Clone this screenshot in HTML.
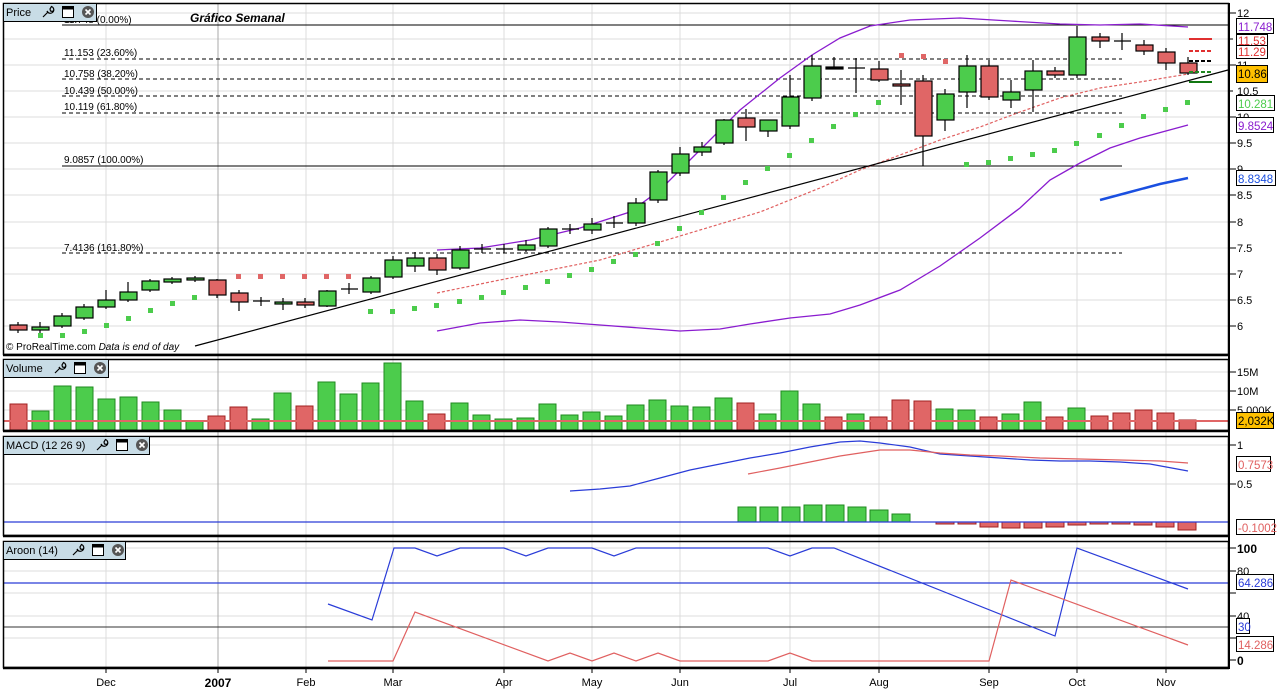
<!DOCTYPE html>
<html><head><meta charset="utf-8"><style>
body{margin:0;width:1281px;height:690px;background:#fff;overflow:hidden;font-family:"Liberation Sans",sans-serif}
svg text{font-family:"Liberation Sans",sans-serif}
</style></head><body>
<svg width="1281" height="690" viewBox="0 0 1281 690" xmlns="http://www.w3.org/2000/svg">
<g stroke="#dcdcdc" stroke-width="1">
<line x1="106" y1="3" x2="106" y2="668"/><line x1="306" y1="3" x2="306" y2="668"/><line x1="393" y1="3" x2="393" y2="668"/><line x1="504" y1="3" x2="504" y2="668"/><line x1="592" y1="3" x2="592" y2="668"/><line x1="680" y1="3" x2="680" y2="668"/><line x1="790" y1="3" x2="790" y2="668"/><line x1="879" y1="3" x2="879" y2="668"/><line x1="989" y1="3" x2="989" y2="668"/><line x1="1077" y1="3" x2="1077" y2="668"/><line x1="1166" y1="3" x2="1166" y2="668"/>
<line x1="3" y1="13" x2="1228" y2="13"/><line x1="3" y1="39" x2="1228" y2="39"/><line x1="3" y1="65" x2="1228" y2="65"/><line x1="3" y1="91" x2="1228" y2="91"/><line x1="3" y1="117" x2="1228" y2="117"/><line x1="3" y1="143" x2="1228" y2="143"/><line x1="3" y1="169" x2="1228" y2="169"/><line x1="3" y1="195" x2="1228" y2="195"/><line x1="3" y1="222" x2="1228" y2="222"/><line x1="3" y1="248" x2="1228" y2="248"/><line x1="3" y1="274" x2="1228" y2="274"/><line x1="3" y1="300" x2="1228" y2="300"/><line x1="3" y1="326" x2="1228" y2="326"/>
<line x1="3" y1="372" x2="1228" y2="372"/><line x1="3" y1="391" x2="1228" y2="391"/><line x1="3" y1="410" x2="1228" y2="410"/>
<line x1="3" y1="445" x2="1228" y2="445"/><line x1="3" y1="484" x2="1228" y2="484"/>
<line x1="3" y1="548" x2="1228" y2="548"/><line x1="3" y1="571" x2="1228" y2="571"/><line x1="3" y1="593" x2="1228" y2="593"/><line x1="3" y1="616" x2="1228" y2="616"/><line x1="3" y1="638" x2="1228" y2="638"/>
</g>
<line x1="218" y1="3" x2="218" y2="668" stroke="#a8a8a8"/>
<g stroke="#000" stroke-width="1">
<line x1="62" y1="25" x2="1228" y2="25"/>
<line x1="62" y1="166" x2="1122" y2="166"/>
<g stroke-dasharray="4,3"><line x1="62" y1="59" x2="1122" y2="59"/><line x1="62" y1="79" x2="1122" y2="79"/><line x1="62" y1="96" x2="1122" y2="96"/><line x1="62" y1="113" x2="1122" y2="113"/><line x1="62" y1="253" x2="1122" y2="253"/></g>
</g>
<g font-size="10" fill="#000">
<text x="64" y="23">11.748 (0.00%)</text>
<text x="64" y="56">11.153 (23.60%)</text><text x="64" y="77">10.758 (38.20%)</text><text x="64" y="94">10.439 (50.00%)</text><text x="64" y="110">10.119 (61.80%)</text><text x="64" y="163">9.0857 (100.00%)</text><text x="64" y="251">7.4136 (161.80%)</text>
</g>
<text x="190" y="22" font-size="12" font-weight="bold" font-style="italic" fill="#000">Gráfico Semanal</text>
<polyline fill="none" stroke="#8a1ccf" stroke-width="1.3" points="437,250 480,248 530,240 580,228 630,212 660,190 700,150 740,110 780,78 812,55 840,38 870,26 910,20 960,18 1010,21 1060,24 1100,25 1140,24 1188,27"/>
<polyline fill="none" stroke="#8a1ccf" stroke-width="1.3" points="437,331 480,323 520,320 560,322 600,325 640,328 680,331 720,329 750,324 790,318 830,314 860,305 900,290 940,266 980,238 1020,208 1050,180 1080,163 1110,148 1140,138 1188,125"/>
<polyline fill="none" stroke="#e06060" stroke-width="1.2" stroke-dasharray="3,2" points="437,293 490,282 540,272 600,260 650,245 700,230 760,212 820,188 860,170 900,155 940,140 980,127 1020,112 1060,98 1100,88 1140,82 1188,74"/>
<line x1="195" y1="346" x2="1228" y2="70" stroke="#000" stroke-width="1.2"/>
<g fill="#4ccc4c">
<rect x="38" y="333" width="5" height="5"/><rect x="60" y="333" width="5" height="5"/><rect x="82" y="329" width="5" height="5"/><rect x="104" y="323" width="5" height="5"/><rect x="126" y="316" width="5" height="5"/><rect x="148" y="308" width="5" height="5"/><rect x="170" y="301" width="5" height="5"/><rect x="192" y="295" width="5" height="5"/>
<rect x="368" y="309" width="5" height="5"/><rect x="390" y="309" width="5" height="5"/><rect x="412" y="306" width="5" height="5"/><rect x="434" y="303" width="5" height="5"/><rect x="457" y="299" width="5" height="5"/><rect x="479" y="295" width="5" height="5"/><rect x="501" y="290" width="5" height="5"/><rect x="523" y="285" width="5" height="5"/><rect x="545" y="279" width="5" height="5"/><rect x="567" y="273" width="5" height="5"/><rect x="589" y="267" width="5" height="5"/><rect x="611" y="259" width="5" height="5"/><rect x="633" y="252" width="5" height="5"/><rect x="655" y="241" width="5" height="5"/><rect x="677" y="226" width="5" height="5"/><rect x="699" y="210" width="5" height="5"/><rect x="721" y="195" width="5" height="5"/><rect x="743" y="180" width="5" height="5"/><rect x="765" y="166" width="5" height="5"/><rect x="787" y="153" width="5" height="5"/><rect x="809" y="138" width="5" height="5"/><rect x="831" y="124" width="5" height="5"/><rect x="853" y="112" width="5" height="5"/><rect x="876" y="100" width="5" height="5"/>
<rect x="964" y="162" width="5" height="5"/><rect x="986" y="160" width="5" height="5"/><rect x="1008" y="156" width="5" height="5"/><rect x="1030" y="152" width="5" height="5"/><rect x="1052" y="148" width="5" height="5"/><rect x="1074" y="141" width="5" height="5"/><rect x="1097" y="133" width="5" height="5"/><rect x="1119" y="123" width="5" height="5"/><rect x="1141" y="114" width="5" height="5"/><rect x="1163" y="107" width="5" height="5"/><rect x="1185" y="100" width="5" height="5"/>
</g>
<g fill="#e06666">
<rect x="236" y="274" width="5" height="5"/><rect x="258" y="274" width="5" height="5"/><rect x="280" y="274" width="5" height="5"/><rect x="302" y="274" width="5" height="5"/><rect x="324" y="274" width="5" height="5"/><rect x="346" y="274" width="5" height="5"/>
<rect x="899" y="53" width="5" height="5"/><rect x="921" y="54" width="5" height="5"/><rect x="943" y="59" width="5" height="5"/>
</g>
<g stroke="#000" stroke-width="1.2">
<line x1="18" y1="322" x2="18" y2="333"/><rect x="10" y="325" width="17" height="5" fill="#e06666"/>
<line x1="40" y1="322" x2="40" y2="333"/><rect x="32" y="327" width="17" height="3" fill="#4ccc4c"/>
<line x1="62" y1="313" x2="62" y2="328"/><rect x="54" y="316" width="17" height="10" fill="#4ccc4c"/>
<line x1="84" y1="304" x2="84" y2="320"/><rect x="76" y="307" width="17" height="11" fill="#4ccc4c"/>
<line x1="106" y1="290" x2="106" y2="309"/><rect x="98" y="300" width="17" height="7" fill="#4ccc4c"/>
<line x1="128" y1="282" x2="128" y2="302"/><rect x="120" y="292" width="17" height="8" fill="#4ccc4c"/>
<line x1="150" y1="279" x2="150" y2="292"/><rect x="142" y="281" width="17" height="9" fill="#4ccc4c"/>
<line x1="172" y1="277" x2="172" y2="284"/><rect x="164" y="279" width="17" height="3" fill="#4ccc4c"/>
<line x1="195" y1="276" x2="195" y2="282"/><rect x="187" y="278" width="17" height="2" fill="#4ccc4c"/>
<line x1="217" y1="279" x2="217" y2="298"/><rect x="209" y="280" width="17" height="15" fill="#e06666"/>
<line x1="239" y1="290" x2="239" y2="311"/><rect x="231" y="293" width="17" height="9" fill="#e06666"/>
<line x1="261" y1="297" x2="261" y2="306"/><line x1="253" y1="301" x2="270" y2="301"/>
<line x1="283" y1="298" x2="283" y2="310"/><rect x="275" y="302" width="17" height="2" fill="#4ccc4c"/>
<line x1="305" y1="298" x2="305" y2="308"/><rect x="297" y="302" width="17" height="3" fill="#e06666"/>
<line x1="327" y1="290" x2="327" y2="307"/><rect x="319" y="291" width="17" height="15" fill="#4ccc4c"/>
<line x1="349" y1="283" x2="349" y2="294"/><line x1="341" y1="289" x2="358" y2="289"/>
<line x1="371" y1="276" x2="371" y2="294"/><rect x="363" y="278" width="17" height="14" fill="#4ccc4c"/>
<line x1="393" y1="256" x2="393" y2="279"/><rect x="385" y="260" width="17" height="17" fill="#4ccc4c"/>
<line x1="415" y1="252" x2="415" y2="272"/><rect x="407" y="258" width="17" height="8" fill="#4ccc4c"/>
<line x1="437" y1="254" x2="437" y2="275"/><rect x="429" y="258" width="17" height="12" fill="#e06666"/>
<line x1="460" y1="246" x2="460" y2="270"/><rect x="452" y="250" width="17" height="18" fill="#4ccc4c"/>
<line x1="482" y1="244" x2="482" y2="253"/><line x1="474" y1="249" x2="491" y2="249"/>
<line x1="504" y1="244" x2="504" y2="253"/><line x1="496" y1="249" x2="513" y2="249"/>
<line x1="526" y1="240" x2="526" y2="252"/><rect x="518" y="245" width="17" height="5" fill="#4ccc4c"/>
<line x1="548" y1="227" x2="548" y2="248"/><rect x="540" y="229" width="17" height="17" fill="#4ccc4c"/>
<line x1="570" y1="224" x2="570" y2="234"/><line x1="562" y1="229" x2="579" y2="229"/>
<line x1="592" y1="218" x2="592" y2="234"/><rect x="584" y="224" width="17" height="6" fill="#4ccc4c"/>
<line x1="614" y1="216" x2="614" y2="228"/><line x1="606" y1="223" x2="623" y2="223"/>
<line x1="636" y1="198" x2="636" y2="226"/><rect x="628" y="203" width="17" height="20" fill="#4ccc4c"/>
<line x1="658" y1="170" x2="658" y2="203"/><rect x="650" y="172" width="17" height="28" fill="#4ccc4c"/>
<line x1="680" y1="147" x2="680" y2="176"/><rect x="672" y="154" width="17" height="19" fill="#4ccc4c"/>
<line x1="702" y1="142" x2="702" y2="156"/><rect x="694" y="147" width="17" height="5" fill="#4ccc4c"/>
<line x1="724" y1="119" x2="724" y2="145"/><rect x="716" y="120" width="17" height="23" fill="#4ccc4c"/>
<line x1="746" y1="109" x2="746" y2="141"/><rect x="738" y="118" width="17" height="9" fill="#e06666"/>
<line x1="768" y1="120" x2="768" y2="137"/><rect x="760" y="120" width="17" height="11" fill="#4ccc4c"/>
<line x1="790" y1="75" x2="790" y2="129"/><rect x="782" y="97" width="17" height="29" fill="#4ccc4c"/>
<line x1="812" y1="55" x2="812" y2="101"/><rect x="804" y="66" width="17" height="32" fill="#4ccc4c"/>
<line x1="834" y1="57" x2="834" y2="69"/><rect x="826" y="67" width="17" height="2" fill="#000"/>
<line x1="856" y1="58" x2="856" y2="93"/><line x1="848" y1="68" x2="865" y2="68"/>
<line x1="879" y1="61" x2="879" y2="82"/><rect x="871" y="69" width="17" height="11" fill="#e06666"/>
<line x1="901" y1="70" x2="901" y2="105"/><rect x="893" y="84" width="17" height="2" fill="#e06666"/>
<line x1="923" y1="75" x2="923" y2="166"/><rect x="915" y="81" width="17" height="55" fill="#e06666"/>
<line x1="945" y1="89" x2="945" y2="131"/><rect x="937" y="94" width="17" height="26" fill="#4ccc4c"/>
<line x1="967" y1="55" x2="967" y2="108"/><rect x="959" y="66" width="17" height="26" fill="#4ccc4c"/>
<line x1="989" y1="60" x2="989" y2="100"/><rect x="981" y="66" width="17" height="31" fill="#e06666"/>
<line x1="1011" y1="80" x2="1011" y2="108"/><rect x="1003" y="92" width="17" height="8" fill="#4ccc4c"/>
<line x1="1033" y1="60" x2="1033" y2="112"/><rect x="1025" y="71" width="17" height="19" fill="#4ccc4c"/>
<line x1="1055" y1="67" x2="1055" y2="78"/><rect x="1047" y="71" width="17" height="4" fill="#e06666"/>
<line x1="1077" y1="26" x2="1077" y2="78"/><rect x="1069" y="37" width="17" height="38" fill="#4ccc4c"/>
<line x1="1100" y1="33" x2="1100" y2="48"/><rect x="1092" y="37" width="17" height="4" fill="#e06666"/>
<line x1="1122" y1="33" x2="1122" y2="50"/><line x1="1114" y1="41" x2="1131" y2="41"/>
<line x1="1144" y1="40" x2="1144" y2="55"/><rect x="1136" y="45" width="17" height="6" fill="#e06666"/>
<line x1="1166" y1="48" x2="1166" y2="70"/><rect x="1158" y="52" width="17" height="11" fill="#e06666"/>
<line x1="1188" y1="57" x2="1188" y2="75"/><rect x="1180" y="63" width="17" height="10" fill="#e06666"/>
</g>
<line x1="1189" y1="39" x2="1212" y2="39" stroke="#e03030" stroke-width="2"/>
<line x1="1189" y1="51" x2="1212" y2="51" stroke="#e03030" stroke-width="2" stroke-dasharray="4,2"/>
<line x1="1189" y1="61" x2="1212" y2="61" stroke="#000" stroke-width="2" stroke-dasharray="4,2"/>
<line x1="1189" y1="72" x2="1212" y2="72" stroke="#228822" stroke-width="2" stroke-dasharray="4,2"/>
<line x1="1189" y1="82" x2="1212" y2="82" stroke="#117711" stroke-width="2"/>
<polyline fill="none" stroke="#1a4fe0" stroke-width="2.5" points="1100,200 1130,192 1160,184 1188,178"/>
<g stroke-width="1">
<rect x="10" y="404" width="17" height="26" fill="#e06666" stroke="#a02020"/>
<rect x="32" y="411" width="17" height="19" fill="#4ccc4c" stroke="#1f8a1f"/>
<rect x="54" y="386" width="17" height="44" fill="#4ccc4c" stroke="#1f8a1f"/>
<rect x="76" y="387" width="17" height="43" fill="#4ccc4c" stroke="#1f8a1f"/>
<rect x="98" y="399" width="17" height="31" fill="#4ccc4c" stroke="#1f8a1f"/>
<rect x="120" y="397" width="17" height="33" fill="#4ccc4c" stroke="#1f8a1f"/>
<rect x="142" y="402" width="17" height="28" fill="#4ccc4c" stroke="#1f8a1f"/>
<rect x="164" y="410" width="17" height="20" fill="#4ccc4c" stroke="#1f8a1f"/>
<rect x="186" y="421" width="17" height="9" fill="#4ccc4c" stroke="#1f8a1f"/>
<rect x="208" y="416" width="17" height="14" fill="#e06666" stroke="#a02020"/>
<rect x="230" y="407" width="17" height="23" fill="#e06666" stroke="#a02020"/>
<rect x="252" y="419" width="17" height="11" fill="#4ccc4c" stroke="#1f8a1f"/>
<rect x="274" y="393" width="17" height="37" fill="#4ccc4c" stroke="#1f8a1f"/>
<rect x="296" y="406" width="17" height="24" fill="#e06666" stroke="#a02020"/>
<rect x="318" y="382" width="17" height="48" fill="#4ccc4c" stroke="#1f8a1f"/>
<rect x="340" y="394" width="17" height="36" fill="#4ccc4c" stroke="#1f8a1f"/>
<rect x="362" y="383" width="17" height="47" fill="#4ccc4c" stroke="#1f8a1f"/>
<rect x="384" y="363" width="17" height="67" fill="#4ccc4c" stroke="#1f8a1f"/>
<rect x="406" y="401" width="17" height="29" fill="#4ccc4c" stroke="#1f8a1f"/>
<rect x="428" y="414" width="17" height="16" fill="#e06666" stroke="#a02020"/>
<rect x="451" y="403" width="17" height="27" fill="#4ccc4c" stroke="#1f8a1f"/>
<rect x="473" y="415" width="17" height="15" fill="#4ccc4c" stroke="#1f8a1f"/>
<rect x="495" y="419" width="17" height="11" fill="#4ccc4c" stroke="#1f8a1f"/>
<rect x="517" y="418" width="17" height="12" fill="#4ccc4c" stroke="#1f8a1f"/>
<rect x="539" y="404" width="17" height="26" fill="#4ccc4c" stroke="#1f8a1f"/>
<rect x="561" y="415" width="17" height="15" fill="#4ccc4c" stroke="#1f8a1f"/>
<rect x="583" y="412" width="17" height="18" fill="#4ccc4c" stroke="#1f8a1f"/>
<rect x="605" y="416" width="17" height="14" fill="#4ccc4c" stroke="#1f8a1f"/>
<rect x="627" y="405" width="17" height="25" fill="#4ccc4c" stroke="#1f8a1f"/>
<rect x="649" y="400" width="17" height="30" fill="#4ccc4c" stroke="#1f8a1f"/>
<rect x="671" y="406" width="17" height="24" fill="#4ccc4c" stroke="#1f8a1f"/>
<rect x="693" y="407" width="17" height="23" fill="#4ccc4c" stroke="#1f8a1f"/>
<rect x="715" y="398" width="17" height="32" fill="#4ccc4c" stroke="#1f8a1f"/>
<rect x="737" y="403" width="17" height="27" fill="#e06666" stroke="#a02020"/>
<rect x="759" y="414" width="17" height="16" fill="#4ccc4c" stroke="#1f8a1f"/>
<rect x="781" y="391" width="17" height="39" fill="#4ccc4c" stroke="#1f8a1f"/>
<rect x="803" y="404" width="17" height="26" fill="#4ccc4c" stroke="#1f8a1f"/>
<rect x="825" y="417" width="17" height="13" fill="#e06666" stroke="#a02020"/>
<rect x="847" y="414" width="17" height="16" fill="#4ccc4c" stroke="#1f8a1f"/>
<rect x="870" y="417" width="17" height="13" fill="#e06666" stroke="#a02020"/>
<rect x="892" y="400" width="17" height="30" fill="#e06666" stroke="#a02020"/>
<rect x="914" y="401" width="17" height="29" fill="#e06666" stroke="#a02020"/>
<rect x="936" y="409" width="17" height="21" fill="#4ccc4c" stroke="#1f8a1f"/>
<rect x="958" y="410" width="17" height="20" fill="#4ccc4c" stroke="#1f8a1f"/>
<rect x="980" y="417" width="17" height="13" fill="#e06666" stroke="#a02020"/>
<rect x="1002" y="414" width="17" height="16" fill="#4ccc4c" stroke="#1f8a1f"/>
<rect x="1024" y="402" width="17" height="28" fill="#4ccc4c" stroke="#1f8a1f"/>
<rect x="1046" y="417" width="17" height="13" fill="#e06666" stroke="#a02020"/>
<rect x="1068" y="408" width="17" height="22" fill="#4ccc4c" stroke="#1f8a1f"/>
<rect x="1091" y="416" width="17" height="14" fill="#e06666" stroke="#a02020"/>
<rect x="1113" y="413" width="17" height="17" fill="#e06666" stroke="#a02020"/>
<rect x="1135" y="410" width="17" height="20" fill="#e06666" stroke="#a02020"/>
<rect x="1157" y="413" width="17" height="17" fill="#e06666" stroke="#a02020"/>
<rect x="1179" y="420" width="17" height="10" fill="#e06666" stroke="#a02020"/>
</g>
<line x1="3" y1="421" x2="1228" y2="421" stroke="#e06666" stroke-width="2"/>
<g fill="#4ccc4c" stroke="#1f8a1f">
<rect x="738" y="507" width="18" height="15"/><rect x="760" y="507" width="18" height="15"/><rect x="782" y="507" width="18" height="15"/><rect x="804" y="505" width="18" height="17"/><rect x="826" y="505" width="18" height="17"/><rect x="848" y="507" width="18" height="15"/><rect x="870" y="510" width="18" height="12"/><rect x="892" y="514" width="18" height="8"/>
</g>
<g fill="#e06666" stroke="#a02020">
<rect x="936" y="522" width="18" height="2"/><rect x="958" y="522" width="18" height="2"/><rect x="980" y="522" width="18" height="5"/><rect x="1002" y="522" width="18" height="6"/><rect x="1024" y="522" width="18" height="6"/><rect x="1046" y="522" width="18" height="5"/><rect x="1068" y="522" width="18" height="3"/><rect x="1090" y="522" width="18" height="2"/><rect x="1112" y="522" width="18" height="2"/><rect x="1134" y="522" width="18" height="3"/><rect x="1156" y="522" width="18" height="5"/><rect x="1178" y="522" width="18" height="8"/>
</g>
<line x1="3" y1="522" x2="1228" y2="522" stroke="#2a3cd8" stroke-width="1.3"/>
<polyline fill="none" stroke="#2a3cd8" stroke-width="1.2" points="570,491 600,489 630,486 660,478 690,470 720,464 750,458 780,453 810,447 840,442 860,441 880,443 910,447 940,454 970,456 1000,458 1030,460 1060,461 1090,461 1120,462 1150,464 1188,471"/>
<polyline fill="none" stroke="#e06060" stroke-width="1.2" points="748,474 780,468 810,462 840,456 880,450 910,450 940,453 970,455 1000,456 1040,458 1080,459 1120,460 1160,461 1188,463"/>
<line x1="3" y1="583" x2="1228" y2="583" stroke="#2a3cd8" stroke-width="1.2"/>
<line x1="3" y1="627" x2="1228" y2="627" stroke="#333" stroke-width="1"/>
<polyline fill="none" stroke="#2a3cd8" stroke-width="1.2" points="328,604 372,620 394,548 415,548 437,556 460,548 504,548 526,556 548,548 592,548 614,556 636,548 768,548 790,556 812,548 834,548 1055,636 1077,548 1188,589"/>
<polyline fill="none" stroke="#e06060" stroke-width="1.2" points="328,661 393,661 415,612 548,661 570,653 592,661 614,653 636,661 658,653 680,661 768,661 790,653 812,661 989,661 1011,580 1188,645"/>
<g fill="none" stroke="#000">
<rect x="3.5" y="3.5" width="1225" height="351" stroke-width="1.5"/>
<line x1="3" y1="355" x2="1229" y2="355" stroke-width="2.5"/>
<rect x="3.5" y="359.5" width="1225" height="71" stroke-width="1.5"/>
<line x1="3" y1="431" x2="1229" y2="431" stroke-width="2.5"/>
<rect x="3.5" y="436.5" width="1225" height="99" stroke-width="1.5"/>
<line x1="3" y1="536" x2="1229" y2="536" stroke-width="2.5"/>
<rect x="3.5" y="541.5" width="1225" height="126" stroke-width="1.5"/>
<line x1="3" y1="668" x2="1229" y2="668" stroke-width="2.5"/>
<line x1="1229" y1="3" x2="1229" y2="669" stroke-width="2"/>
</g>
<g font-size="11" fill="#000">
<rect x="3.5" y="3.5" width="93" height="18" fill="#c8dce6" stroke="#000"/><text x="6" y="16">Price</text>
<rect x="3.5" y="359.5" width="105" height="18" fill="#c8dce6" stroke="#000"/><text x="6" y="372">Volume</text>
<rect x="3.5" y="436.5" width="146" height="18" fill="#c8dce6" stroke="#000"/><text x="6" y="449">MACD (12 26 9)</text>
<rect x="3.5" y="541.5" width="122" height="18" fill="#c8dce6" stroke="#000"/><text x="6" y="554">Aroon (14)</text>
</g>
<g id="ic1" transform="translate(42,6)">
<path d="M1,11 L6,6 M5,5 a3.5,3.5 0 1 0 4.5,-4.5 L8,3 L8.5,5 L10.5,5.5 L12,4 M5,5 L6,6" stroke="#000" fill="none" stroke-width="1.2"/>
<rect x="20.5" y="0.5" width="11" height="11" fill="#fff" stroke="#000"/><rect x="20.5" y="0.5" width="11" height="3" fill="#000"/>
<circle cx="46" cy="6" r="6" fill="#555"/><path d="M43.5,3.5 L48.5,8.5 M48.5,3.5 L43.5,8.5" stroke="#fff" stroke-width="1.6"/></g>
<use href="#ic1" x="12" y="356"/>
<use href="#ic1" x="54" y="433"/>
<use href="#ic1" x="30" y="538"/>
<text x="6" y="350" font-size="10" fill="#000">© ProRealTime.com  <tspan font-style="italic">Data is end of day</tspan></text>
<g stroke="#000"><line x1="1229" y1="13" x2="1236" y2="13"/><line x1="1229" y1="39" x2="1233" y2="39"/><line x1="1229" y1="65" x2="1236" y2="65"/><line x1="1229" y1="91" x2="1233" y2="91"/><line x1="1229" y1="117" x2="1236" y2="117"/><line x1="1229" y1="143" x2="1236" y2="143"/><line x1="1229" y1="169" x2="1236" y2="169"/><line x1="1229" y1="195" x2="1236" y2="195"/><line x1="1229" y1="222" x2="1236" y2="222"/><line x1="1229" y1="248" x2="1236" y2="248"/><line x1="1229" y1="274" x2="1236" y2="274"/><line x1="1229" y1="300" x2="1236" y2="300"/><line x1="1229" y1="326" x2="1236" y2="326"/>
<line x1="1229" y1="372" x2="1236" y2="372"/><line x1="1229" y1="391" x2="1236" y2="391"/><line x1="1229" y1="410" x2="1236" y2="410"/><line x1="1229" y1="445" x2="1236" y2="445"/><line x1="1229" y1="484" x2="1236" y2="484"/><line x1="1229" y1="548" x2="1236" y2="548"/><line x1="1229" y1="571" x2="1236" y2="571"/><line x1="1229" y1="593" x2="1236" y2="593"/><line x1="1229" y1="616" x2="1236" y2="616"/><line x1="1229" y1="638" x2="1236" y2="638"/><line x1="1229" y1="660" x2="1236" y2="660"/></g>
<g font-size="11" fill="#000">
<text x="1237" y="17">12</text><text x="1237" y="69">11</text><text x="1237" y="95">10.5</text><text x="1237" y="121">10</text><text x="1237" y="147">9.5</text><text x="1237" y="173">9</text><text x="1237" y="199">8.5</text><text x="1237" y="226">8</text><text x="1237" y="252">7.5</text><text x="1237" y="278">7</text><text x="1237" y="304">6.5</text><text x="1237" y="330">6</text>
<text x="1237" y="376">15M</text><text x="1237" y="395">10M</text><text x="1237" y="414">5,000K</text>
<text x="1237" y="449">1</text><text x="1237" y="488">0.5</text>
<text x="1237" y="553" font-weight="bold" font-size="12">100</text><text x="1237" y="575">80</text><text x="1237" y="620">40</text><text x="1237" y="665" font-weight="bold" font-size="12">0</text>
</g>
<g font-size="11.5">
<rect x="1236.5" y="18.5" width="37" height="15" fill="#fff" stroke="#000"/><text x="1238" y="31" fill="#8a1ccf">11.748</text>
<rect x="1236.5" y="34.5" width="31" height="13" fill="#fff" stroke="#000"/><text x="1238" y="45" fill="#e03030">11.53</text>
<rect x="1236.5" y="45.5" width="31" height="13" fill="#fff" stroke="#000"/><text x="1238" y="56" fill="#e03030">11.29</text>
<rect x="1236.5" y="65.5" width="31" height="17" fill="#ffc000" stroke="#000"/><text x="1238" y="78" fill="#000">10.86</text>
<rect x="1236.5" y="95.5" width="38" height="15" fill="#fff" stroke="#000"/><text x="1238" y="108" fill="#4ccc4c">10.281</text>
<rect x="1236.5" y="117.5" width="37" height="15" fill="#fff" stroke="#000"/><text x="1238" y="130" fill="#8a1ccf">9.8524</text>
<rect x="1236.5" y="170.5" width="39" height="15" fill="#fff" stroke="#000"/><text x="1238" y="183" fill="#1a4fe0">8.8348</text>
<rect x="1236.5" y="412.5" width="37" height="16" fill="#ffc000" stroke="#000"/><text x="1238" y="425" fill="#000">2,032K</text>
<rect x="1236.5" y="456.5" width="34" height="15" fill="#fff" stroke="#000"/><text x="1238" y="469" fill="#e06060">0.7573</text>
<rect x="1236.5" y="519.5" width="38" height="15" fill="#fff" stroke="#000"/><text x="1238" y="532" fill="#e06060">-0.1002</text>
<rect x="1236.5" y="574.5" width="37" height="15" fill="#fff" stroke="#000"/><text x="1238" y="587" fill="#2a3cd8">64.286</text>
<rect x="1236.5" y="618.5" width="13" height="15" fill="#fff" stroke="#000"/><text x="1238" y="631" fill="#2a3cd8">30</text>
<rect x="1236.5" y="636.5" width="37" height="15" fill="#fff" stroke="#000"/><text x="1238" y="649" fill="#e06060">14.286</text>
</g>
<g stroke="#000"><line x1="106" y1="668" x2="106" y2="673"/><line x1="218" y1="668" x2="218" y2="673"/><line x1="306" y1="668" x2="306" y2="673"/><line x1="393" y1="668" x2="393" y2="673"/><line x1="504" y1="668" x2="504" y2="673"/><line x1="592" y1="668" x2="592" y2="673"/><line x1="680" y1="668" x2="680" y2="673"/><line x1="790" y1="668" x2="790" y2="673"/><line x1="879" y1="668" x2="879" y2="673"/><line x1="989" y1="668" x2="989" y2="673"/><line x1="1077" y1="668" x2="1077" y2="673"/><line x1="1166" y1="668" x2="1166" y2="673"/></g>
<g font-size="11" fill="#000" text-anchor="middle">
<text x="106" y="686">Dec</text><text x="218" y="687" font-weight="bold" font-size="12">2007</text><text x="306" y="686">Feb</text><text x="393" y="686">Mar</text><text x="504" y="686">Apr</text><text x="592" y="686">May</text><text x="680" y="686">Jun</text><text x="790" y="686">Jul</text><text x="879" y="686">Aug</text><text x="989" y="686">Sep</text><text x="1077" y="686">Oct</text><text x="1166" y="686">Nov</text>
</g>
</svg>
</body></html>
